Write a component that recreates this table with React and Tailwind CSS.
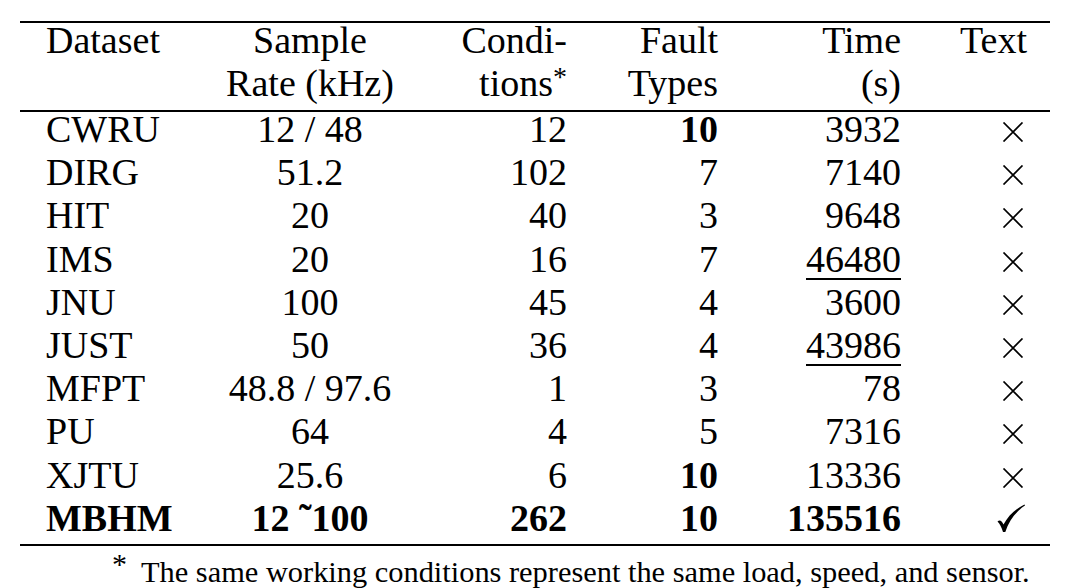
import React from 'react';

const rows = [
  { name: 'CWRU', rate: '12 / 48', cond: '12', fault: '10', faultBold: true, time: '3932' },
  { name: 'DIRG', rate: '51.2', cond: '102', fault: '7', time: '7140' },
  { name: 'HIT', rate: '20', cond: '40', fault: '3', time: '9648' },
  { name: 'IMS', rate: '20', cond: '16', fault: '7', time: '46480', under: true },
  { name: 'JNU', rate: '100', cond: '45', fault: '4', time: '3600' },
  { name: 'JUST', rate: '50', cond: '36', fault: '4', time: '43986', under: true },
  { name: 'MFPT', rate: '48.8 / 97.6', cond: '1', fault: '3', time: '78' },
  { name: 'PU', rate: '64', cond: '4', fault: '5', time: '7316' },
  { name: 'XJTU', rate: '25.6', cond: '6', fault: '10', faultBold: true, time: '13336' },
  { name: 'MBHM', rate: '12 \u02DC100', cond: '262', fault: '10', faultBold: true, time: '135516', bold: true, check: true },
];

const Cross = () => (
  <svg width="28" height="20" viewBox="0 0 28 20" className="inline-block align-baseline">
    <path d="M4.5 0.5 L23.5 19.5 M23.5 0.5 L4.5 19.5" stroke="#000" strokeWidth="1.7" fill="none" />
  </svg>
);

// calligraphic check: heavy short stroke, thin long stroke
const Check = () => (
  <svg width="30" height="29" viewBox="0 0 30 29" className="inline-block align-[-2px] mr-[1px]">
    <path
      d="M1.5 17.5 C3.5 15.5 5.5 16 7.5 20.5 C12 12 19 5 28.5 0.5 L29 1.6 C20 7.5 13 16 9.3 28 L7 28 C5.5 23.5 4 20 1.5 17.5 Z"
      fill="#000"
    />
  </svg>
);

const grid = 'grid grid-cols-[200px_180px_167px_151px_183px_126px] pr-[23px]';

const App = () => {
  return (
    <div className="w-[1080px] h-[588px] overflow-hidden bg-white text-black font-[Liberation_Serif,Times_New_Roman,serif]">
      <div className="pt-[21px] pl-[20px] w-[1050px]">
        <div className="border-t-2 border-black" />

        <div className={`${grid} -mt-[4px] text-[38px] leading-[43.2px]`}>
          <div className="pl-[26px]">Dataset</div>
          <div className="text-center">Sample<br />Rate (kHz)</div>
          <div className="text-right">
            Condi-<br />tions<span className="text-[28px] leading-none align-[10px]">*</span>
          </div>
          <div className="text-right">Fault<br />Types</div>
          <div className="text-right">Time<br />(s)</div>
          <div className="text-right">Text</div>
        </div>

        <div className="mt-[4.5px] border-t-2 border-black" />

        <div className="-mt-[4px] text-[38px] leading-[43.2px]">
          {rows.map((r) => (
            <div key={r.name} className={`${grid} ${r.bold ? 'font-bold' : ''}`}>
              <div className="pl-[26px]">{r.name}</div>
              <div className="text-center">{r.rate}</div>
              <div className="text-right">{r.cond}</div>
              <div className={`text-right ${r.faultBold ? 'font-bold' : ''}`}>{r.fault}</div>
              <div className="text-right">
                <span className={r.under ? 'underline decoration-[1.5px] underline-offset-[6px]' : ''}>{r.time}</span>
              </div>
              <div className="text-right">{r.check ? <Check /> : <Cross />}</div>
            </div>
          ))}
        </div>

        <div className="mt-[4px] border-t-2 border-black" />
      </div>

      <div className="pl-[112px] pt-[3px] text-[30.4px] leading-[36px] whitespace-nowrap">
        <span className="text-[30px] leading-none align-[8px] mr-[14px]">*</span>
        The same working conditions represent the same load, speed, and sensor.
      </div>
    </div>
  );
};

export default App;
